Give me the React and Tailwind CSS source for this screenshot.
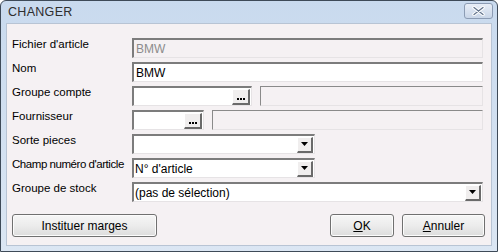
import React from 'react'

const font = { fontFamily: '"Liberation Sans", Arial, sans-serif' }

function Field({ value = '', disabled = false, className = '' }) {
  return (
    <div
      className={`h-[20px] flex items-center pl-[2px] text-[12px] border-t-2 border-l-2 border-b border-r border-t-[#7c7c7c] border-l-[#7c7c7c] border-b-[#e6e3e5] border-r-[#e6e3e5] ${
        disabled ? 'bg-[#f5f1f3] text-[#8c8c8c]' : 'bg-white text-black'
      } ${className}`}
    >
      {value}
    </div>
  )
}

function FlatField({ className = '' }) {
  return (
    <div className={`h-[20px] border-t border-l border-t-[#8a8a8a] border-l-[#8a8a8a] border-b border-r border-b-[#e6e3e5] border-r-[#e6e3e5] bg-[#f5f1f3] ${className}`} />
  )
}

function DotsButton() {
  return (
    <div className="w-[18px] h-[16px] mr-[1px] bg-[#f0eeee] border-t border-l border-t-white border-l-white border-b-2 border-r-2 border-b-[#6a6a6a] border-r-[#6a6a6a] flex items-end justify-center pb-[3px] gap-[1px]">
      <span className="w-[2px] h-[2px] bg-black" />
      <span className="w-[2px] h-[2px] bg-black" />
      <span className="w-[2px] h-[2px] bg-black" />
    </div>
  )
}

function Lookup({ width }) {
  return (
    <div
      className={`h-[20px] flex items-center justify-end bg-white border-t-2 border-l-2 border-b border-r border-t-[#7c7c7c] border-l-[#7c7c7c] border-b-[#e6e3e5] border-r-[#e6e3e5] ${width}`}
    >
      <DotsButton />
    </div>
  )
}

function Combo({ value = '', width }) {
  return (
    <div
      className={`h-[20px] flex items-center justify-between bg-white text-[12px] text-black border-t-2 border-l-2 border-b border-r border-t-[#7c7c7c] border-l-[#7c7c7c] border-b-[#e6e3e5] border-r-[#e6e3e5] ${width}`}
    >
      <span className="pl-[1px]">{value}</span>
      <div className="w-[16px] h-[16px] mr-[1px] bg-[#f0eeee] border-t border-l border-t-white border-l-white border-b-2 border-r-2 border-b-[#6a6a6a] border-r-[#6a6a6a] flex items-center justify-center">
        <svg width="7" height="4" viewBox="0 0 7 4">
          <path d="M0 0h7L3.5 4z" fill="#000" />
        </svg>
      </div>
    </div>
  )
}

function Row({ label, tight = false, children }) {
  return (
    <div className="flex items-start h-[20px]">
      <div
        className={`w-[125px] shrink-0 whitespace-nowrap text-[11.5px] text-black leading-[14px] -mt-[1px] pl-[5px] ${
          tight ? 'tracking-[-0.45px]' : ''
        }`}
      >
        {label}
      </div>
      <div className="flex-1 flex items-center gap-[8px]">{children}</div>
    </div>
  )
}

function Btn({ children, width }) {
  return (
    <div
      className={`h-[23px] ${width} flex items-center justify-center text-[12px] text-black rounded-[3px] border border-[#707070] bg-gradient-to-b from-[#f6f6f6] via-[#ececec] to-[#dcdcdc] shadow-[inset_0_0_0_1px_#fcfcfc]`}
    >
      {children}
    </div>
  )
}

export default function App() {
  return (
    <div style={font} className="w-[498px] h-[252px] bg-white">
      <div className="w-[498px] h-[252px] flex flex-col rounded-t-[6px] border border-[#3e4a58] bg-gradient-to-b from-[#c9daee] to-[#dbe6f3] overflow-hidden">
        <div className="h-[22px] flex items-center justify-between pl-[7px] pr-[4px]">
          <span className="text-[12.5px] text-[#2e2e2e] tracking-[0.3px]">CHANGER</span>
          <div className="w-[29px] h-[16px] -mt-[3px] rounded-[3px] border border-[#8c9cb4] bg-gradient-to-b from-[#e8eef7] to-[#c9d6e8] flex items-center justify-center">
            <svg width="13" height="10" viewBox="0 0 13 10">
              <path d="M2 1.5L11 8.5M11 1.5L2 8.5" stroke="#fff" strokeWidth="3.4" strokeLinecap="round" />
              <path d="M2 1.5L11 8.5M11 1.5L2 8.5" stroke="#66778f" strokeWidth="1.3" strokeLinecap="round" />
            </svg>
          </div>
        </div>
        <div className="flex-1 mx-[5px] mb-[5px] bg-[#f5f1f3] border border-[#b8c4d4] flex flex-col pt-[14px] pr-[8px]">
          <div className="flex flex-col gap-[4px]">
            <Row label="Fichier d'article">
              <Field value="BMW" disabled className="flex-1" />
            </Row>
            <Row label="Nom">
              <Field value="BMW" className="flex-1" />
            </Row>
            <Row label="Groupe compte">
              <Lookup width="w-[120px]" />
              <FlatField className="flex-1" />
            </Row>
            <Row label="Fournisseur">
              <Lookup width="w-[72px]" />
              <FlatField className="flex-1" />
            </Row>
            <Row label="Sorte pieces">
              <Combo width="w-[183px]" />
            </Row>
            <Row label="Champ numéro d'article" tight>
              <Combo value="N° d'article" width="w-[183px]" />
            </Row>
            <Row label="Groupe de stock">
              <Combo value="(pas de sélection)" width="flex-1" />
            </Row>
          </div>
          <div className="flex items-center justify-between mt-[12px] pl-[5px]">
            <Btn width="w-[145px]">Instituer marges</Btn>
            <div className="flex gap-[8px] -mr-[2px]">
              <Btn width="w-[64px]">
                <span><span className="underline">O</span>K</span>
              </Btn>
              <Btn width="w-[83px]">
                <span><span className="underline">A</span>nnuler</span>
              </Btn>
            </div>
          </div>
        </div>
      </div>
    </div>
  )
}
